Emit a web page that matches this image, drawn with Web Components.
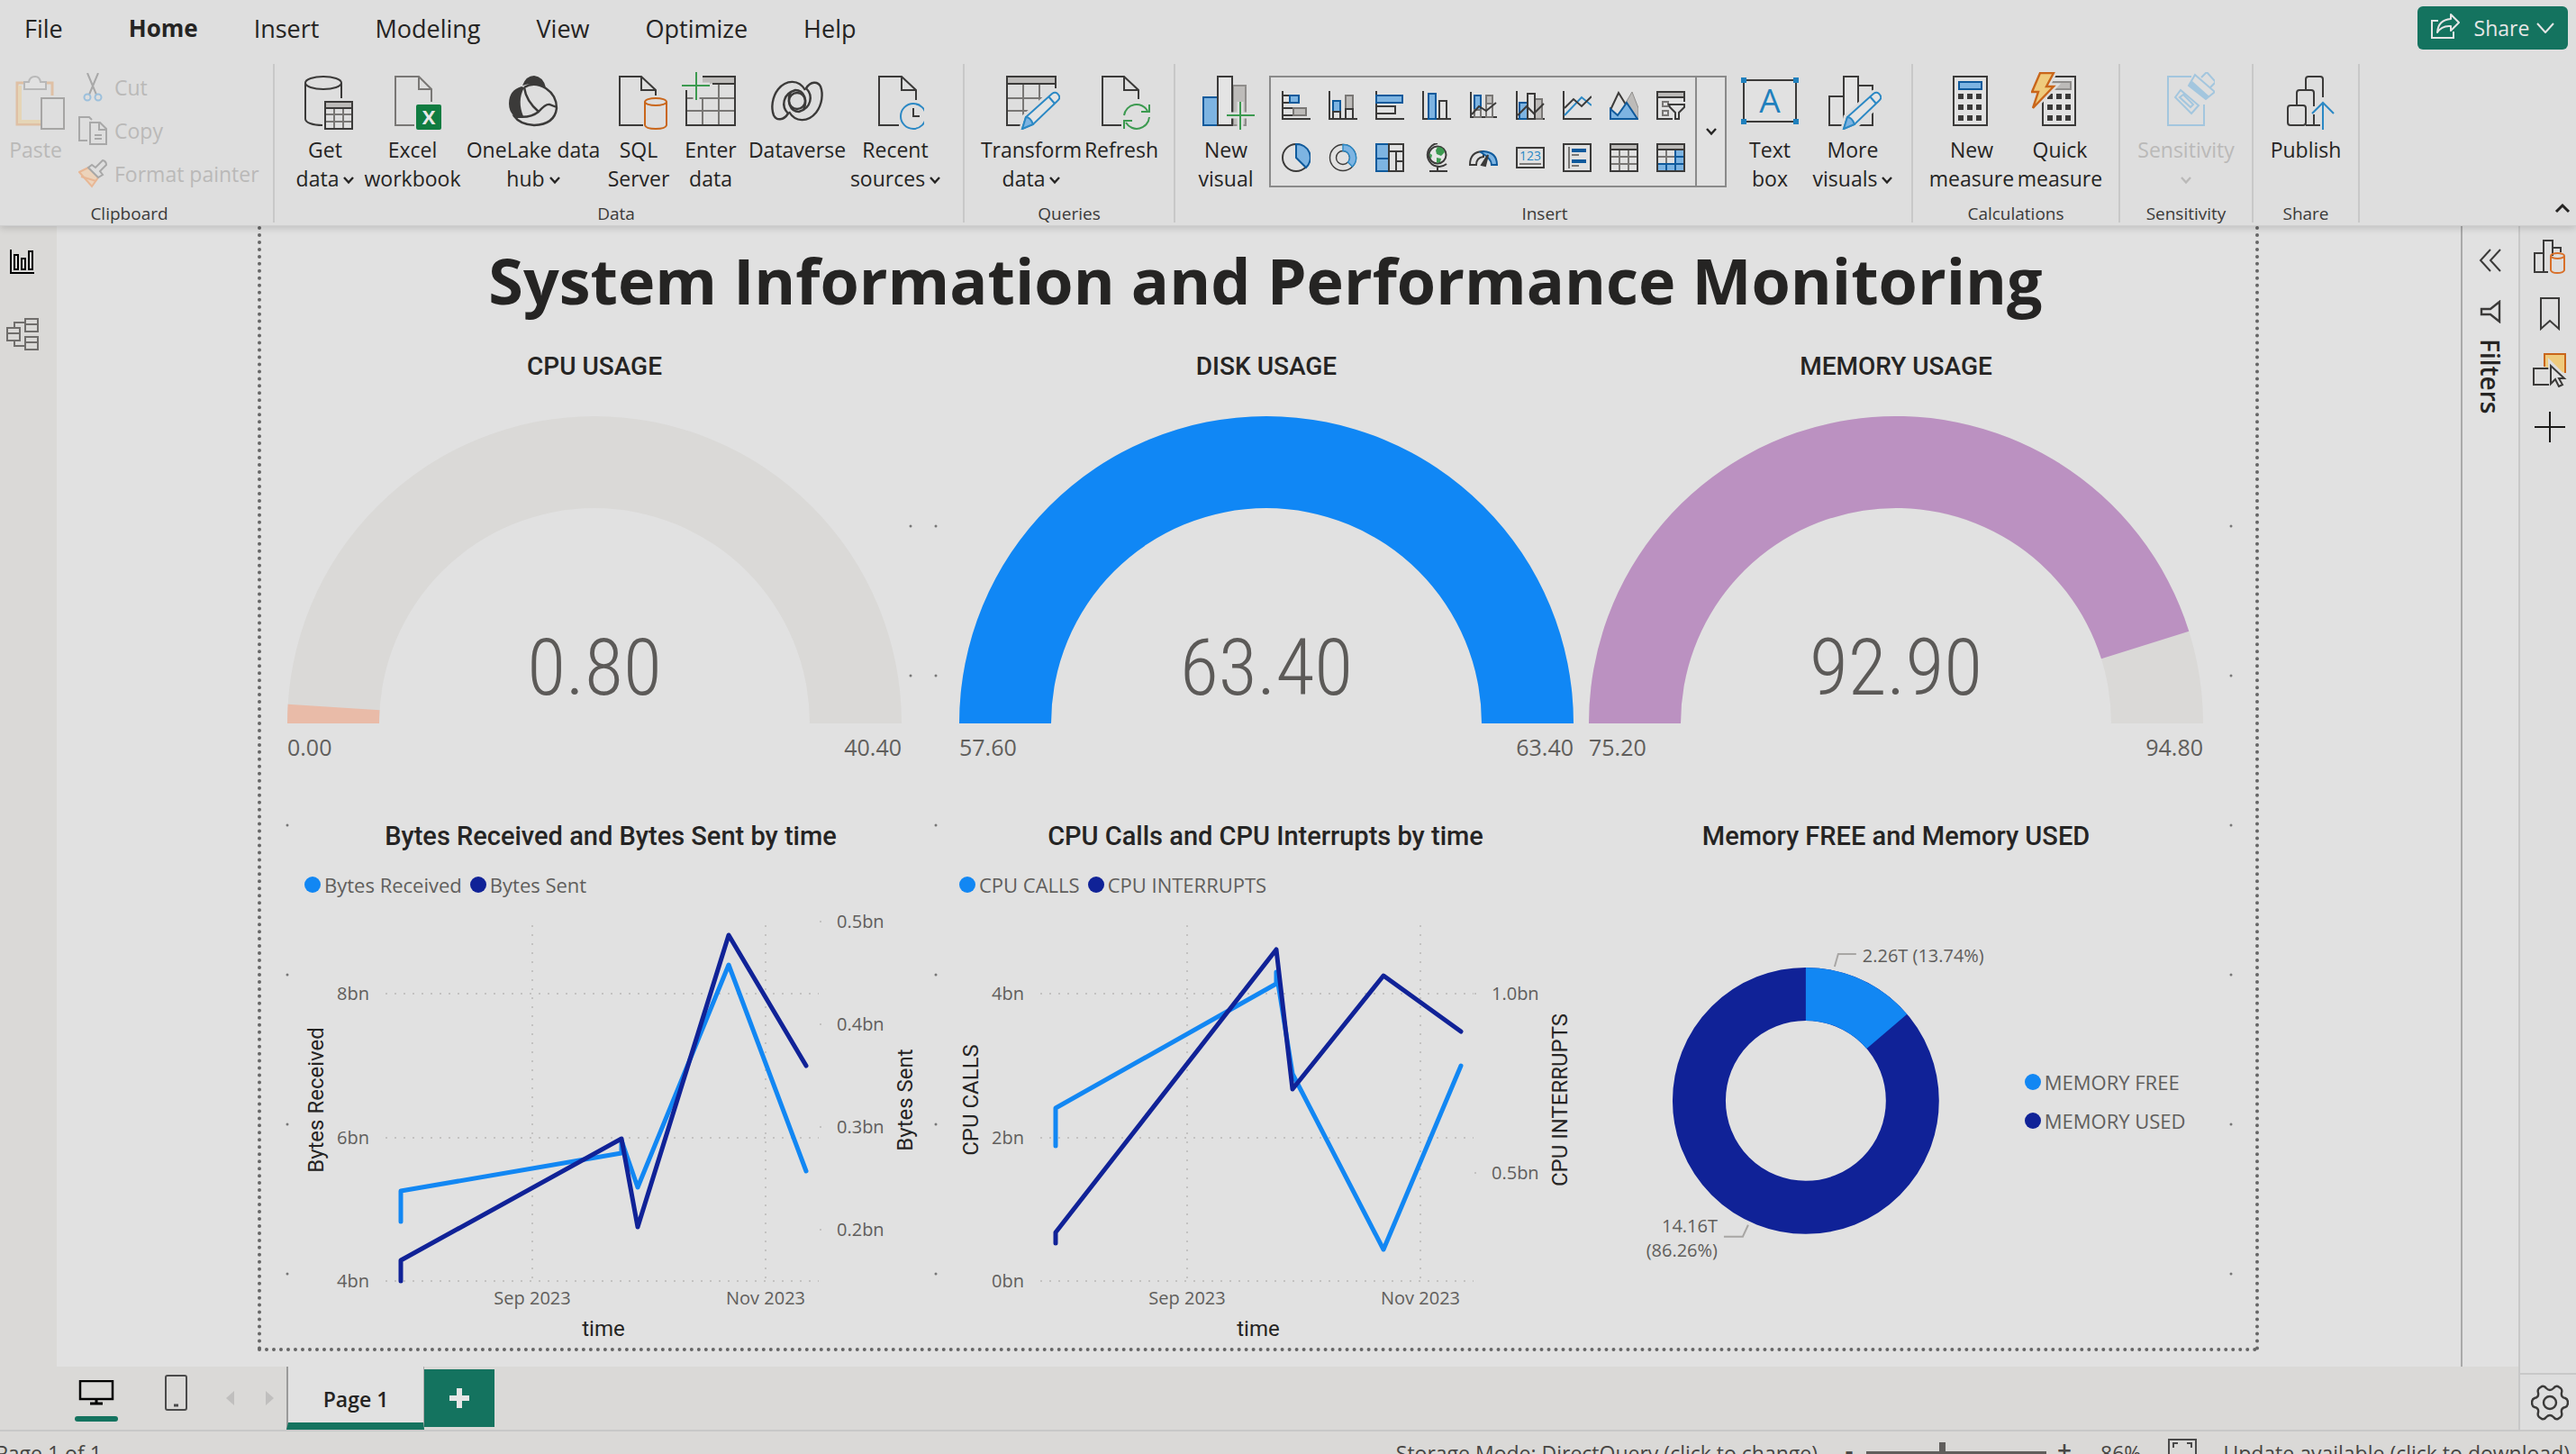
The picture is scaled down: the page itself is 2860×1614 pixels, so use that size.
<!DOCTYPE html>
<html lang="en">
<head>
<meta charset="utf-8">
<title>System Information and Performance Monitoring</title>
<style>
html,body{margin:0;height:100%;overflow:hidden}
body{
  --ribbon:#dedede;--canvas:#e1e1e1;--chrome:#dad9d7;--ink:#252423;--soft:#605e5c;--brand:#14735f;--line:#c8c8c8;
  --din:Roboto,"Liberation Sans",sans-serif;
  font-family:"Open Sans","Noto Sans",sans-serif;font-size:23px;color:var(--ink);background:var(--ribbon);
}
</style>
</head>
<body>
<pbi-app></pbi-app>
<script>
const K='#3b3a39',G='#797775',B='#0f5a9c',LB='#7db4e2',LG='#bdbbb9',BL='#2b88c4',GR='#3c9a50',OR='#c9661b';
const page=(x,r,y=30,b=36)=>`<path d="M${b} 59H${x}V5H${r-16}L${r} 20V${y}M${r-16} 5V20H${r}" fill="none" stroke="${K}" stroke-width="2"/>`;
const pencil=`<path d="M22 64L25 50L54 24Q60 20 63 26Q65 30 62 33L34 60Z" fill="#dedede" stroke="#dedede" stroke-width="7"/><path d="M22 63L26 50L55 24Q59 21 62 25Q65 29 61 32L34 58Z" fill="#e4e4e4" stroke="${BL}" stroke-width="2"/><path d="M22 63L26 50Q31 50 34 58Z" fill="${LB}" stroke="${BL}" stroke-width="2"/><path d="M51 27L58 35" stroke="${BL}" stroke-width="2"/>`;
const axes=`<path d="M1 0V31H32" fill="none" stroke="${K}" stroke-width="2"/>`;
const bar=(x,y,w,h,f,s)=>`<rect x="${x}" y="${y}" width="${w}" height="${h}" fill="${f}" stroke="${s}" stroke-width="2"/>`;
const keys=(x)=>[24,36,48].map(y=>[0,10,20].map(d=>`<rect x="${x+d}" y="${y}" width="6" height="6" fill="${K}"/>`).join('')).join('');
const ICONS={
paste:[64,64,`<g opacity=".55"><path d="M37 58H11V12H18M43 12H50V26" fill="none" stroke="#e0a878" stroke-width="3"/><path d="M14 15V55H37" fill="none" stroke="#eccf97" stroke-width="4"/><path d="M19 11H24Q25 5 31 5Q36 5 37 11H43V19H19Z" fill="#e4e4e4" stroke="#9a9a9a" stroke-width="2"/><rect x="38" y="29" width="25" height="34" fill="#dedede" stroke="${G}" stroke-width="2"/></g>`],
cut:[32,32,`<g fill="none" stroke-width="2"><path d="M10 0L20 24M22 0L12 24" stroke="#a8a8a8"/><circle cx="10" cy="27" r="3.5" stroke="#9cc0dc"/><circle cx="22" cy="27" r="3.5" stroke="#9cc0dc"/></g>`],
copy:[32,32,`<g fill="none" stroke="#a8a8a8" stroke-width="2"><path d="M10 27H1V1H12L15 4"/><path d="M13 7H24L31 14V31H13ZM23 7V15H31M18 21H26M18 25H26"/></g>`],
brush:[32,32,`<path d="M1 14L11 9L22 20L15 30Z" fill="#ecd3bb" stroke="#e8b795" stroke-width="2"/><path d="M3 19L20 24" stroke="#e8b795" stroke-width="2"/><path d="M11 9L15 6L19 9L27 1Q31 2 31 6L24 13L27 17L22 20Z" fill="#dedede" stroke="#a8a8a8" stroke-width="2"/>`],
getdata:[64,64,`<g fill="none" stroke="${K}" stroke-width="2"><ellipse cx="30" cy="12" rx="20" ry="7"/><path d="M10 12V52C10 56 18 59 29 59M50 12V29"/></g><rect x="32" y="33" width="30" height="7" fill="${LG}"/><path d="M32 47H62M32 55H62M42 40V63M52 40V63" stroke="${G}" stroke-width="2"/><path d="M32 33H62V63H32ZM32 40H62" fill="none" stroke="${K}" stroke-width="2"/>`],
excel:[64,64,`<path d="M34 59H13V5H39L53 19V33M39 5V19H53" fill="none" stroke="${G}" stroke-width="2"/><rect x="36" y="36" width="28" height="28" rx="2" fill="#107c41"/><text x="50" y="58" font-family="Open Sans" font-weight="700" font-size="22" text-anchor="middle" fill="#e8e8e8">X</text>`],
onelake:[64,64,`<path d="M20 15Q24 4 33 4Q43 5 46 17Q33 10 20 15Z" fill="${K}"/><path d="M19 16Q5 20 5 35Q5 44 11 49Q16 51 21 49Q14 32 22 17Z" fill="${K}"/><path d="M22 17Q33 10 46 18Q58 26 58 40Q56 58 33 59Q17 58 11 49Q28 52 38 44Q46 35 50 36L58 39M22 17Q24 32 38 44" fill="none" stroke="${K}" stroke-width="2.4"/>`],
sql:[64,64,page(11,51,26,37)+`<g fill="none" stroke="${OR}" stroke-width="2"><ellipse cx="51" cy="33" rx="12" ry="4"/><path d="M39 33V59Q40 63 51 63Q62 63 63 59V33"/></g>`],
enter:[64,64,`<rect x="23" y="5" width="36" height="8" fill="${LG}"/><path d="M5 29H59M5 43H59M23 29V59M41 13V59" stroke="${G}" stroke-width="2"/><path d="M23 5H59V59H5V20M34 13H59" fill="none" stroke="${K}" stroke-width="2"/><path d="M16 0V31M0 15H31" stroke="#dedede" stroke-width="7"/><path d="M16 0V31M0 15H31" stroke="${GR}" stroke-width="2"/>`],
dataverse:[64,64,`<g fill="none" stroke="${K}" stroke-width="2.4"><path d="M41 20C34 8 20 8 11 19C4 28 3 40 6 48C9 54 17 54 22 46C14 38 16 24 30 20C40 20 44 32 39 42"/><path d="M23 44C30 56 44 56 53 45C60 36 61 24 58 16C55 10 47 10 42 18C50 26 48 40 34 44C24 44 20 32 25 22"/><circle cx="32" cy="32" r="9"/></g>`],
recent:[64,64,page(14,55,31,36)+`<circle cx="52" cy="49" r="14" fill="none" stroke="${BL}" stroke-width="2"/><path d="M52 40V49H59" fill="none" stroke="${K}" stroke-width="2"/>`],
transform:[64,64,`<rect x="5" y="5" width="54" height="8" fill="${LG}"/><path d="M5 29H50M5 43H34M23 13V59M41 13V36" stroke="${G}" stroke-width="2"/><path d="M22 59H5V5H59V18M5 13H59" fill="none" stroke="${K}" stroke-width="2"/>`+pencil],
refresh:[64,64,page(11,51,30,32)+`<g fill="none" stroke="${GR}" stroke-width="2"><path d="M35 48A14 14 0 0 1 61 43M63 36V44H54M63 50A14 14 0 0 1 37 56M35 63V54H44"/></g>`],
newvisual:[64,64,bar(40,15,14,44,LG,'#8f8d8b')+bar(7,28,16,31,LB,B)+bar(23,5,16,54,'#e4e4e4',K)+`<path d="M48 33V64M33 48H64" stroke="#dedede" stroke-width="7"/><path d="M48 33V64M33 48H64" stroke="${GR}" stroke-width="2"/>`],
textbox:[64,64,`<rect x="3" y="9" width="58" height="46" fill="#e1e1e1" stroke="${K}" stroke-width="2"/><g fill="#1f80bd"><rect y="6" width="6" height="6"/><rect x="58" y="6" width="6" height="6"/><rect y="52" width="6" height="6"/><rect x="58" y="52" width="6" height="6"/></g><text x="32" y="45" font-family="Open Sans" font-size="37" font-weight="400" text-anchor="middle" fill="#1f80bd">A</text>`],
morevisuals:[64,64,bar(6,27,16,32,'#e0e0e0',K)+bar(22,5,16,54,'#e4e4e4',K)+`<path d="M38 15H54V59H38" fill="none" stroke="${K}" stroke-width="2"/>`+pencil],
newmeasure:[64,64,bar(12,5,37,54,'#e1e1e1',K)+bar(18,11,25,8,LB,B)+keys(17)],
quickmeasure:[64,64,bar(13,5,36,54,'#e1e1e1',K)+bar(20,11,24,8,LG,'#8f8d8b')+keys(18)+`<path d="M10 1H25L17 16H25L2 40L8 22H1Z" fill="#efcb7d" stroke="#dedede" stroke-width="7"/><path d="M10 1H25L17 16H25L2 40L8 22H1Z" fill="#efcb7d" stroke="${OR}" stroke-width="2.4"/>`],
sensitivity:[64,64,`<g fill="none" stroke="#a3c6de" stroke-width="2"><path d="M38 5H12V59H52V36"/><path d="M20 28L26 20L46 37L38 46ZM25 28L29 25L40 36L37 39Z"/><path d="M35 15L42 3L64 22L54 30ZM49 6L55 0L65 11L59 17"/></g><path d="M35 15L39 10L58 27L54 30Z" fill="#a3c6de"/>`],
publish:[64,64,`<g fill="none" stroke="${K}" stroke-width="2"><rect x="12" y="37" width="20" height="22" rx="3"/><path d="M22 37V23Q22 20 25 20H38Q41 20 41 23V38M32 20V8Q32 5 35 5H48Q51 5 51 8V28M32 59H48M41 47V59"/></g><path d="M51 64V34M39 46L51 34L63 46" fill="none" stroke="${BL}" stroke-width="2"/>`],
v1:[32,32,axes+bar(1,5,8,8,'none',K)+bar(9,5,10,8,LB,B)+bar(1,19,12,8,'none',K)+bar(13,19,14,8,LG,G)],
v2:[32,32,axes+bar(5,11,8,12,LB,B)+bar(5,23,8,8,'none',K)+bar(19,5,8,15,LG,G)+bar(19,20,8,11,'none',K)],
v3:[32,32,axes+bar(1,5,29,8,LB,B)+bar(1,17,21,8,'none',K)],
v4:[32,32,axes+bar(7,3,8,28,LB,B)+bar(19,11,8,20,'none',K)],
v5:[32,32,`<path d="M2 1V29H31" fill="none" stroke="${K}" stroke-width="2"/>`+bar(6,5,7,16,LB,B)+bar(6,21,7,8,'none',G)+bar(19,5,7,9,LG,G)+bar(19,14,7,15,'none',G)+`<path d="M3 26L11 17L19 22L30 13" fill="none" stroke="${K}" stroke-width="2"/>`],
v6:[32,32,axes+bar(4,13,9,18,LB,B)+bar(21,9,8,22,LG,G)+bar(13,3,8,28,'#e1e1e1',K)+`<path d="M2 27L12 17L20 25L31 14" fill="none" stroke="${K}" stroke-width="2"/>`],
v7:[32,32,axes+`<path d="M2 27L21 7L32 16" fill="none" stroke="${BL}" stroke-width="2"/><path d="M2 19L12 9L21 17L32 6" fill="none" stroke="${K}" stroke-width="2"/>`],
v8:[32,32,`<path d="M18 13L25 1L32 19V31H25Z" fill="${LG}" stroke="#8f8d8b" stroke-width="1"/><path d="M1 21L10 2L18 15" fill="none" stroke="${K}" stroke-width="2"/><path d="M1 20V31H31L19 13L9 27Z" fill="${LB}" stroke="${B}" stroke-width="2"/>`],
v9:[32,32,`<rect x="1" y="1" width="30" height="6" fill="${LG}"/><path d="M18 31H1V1H31V12M1 7H31" fill="none" stroke="${K}" stroke-width="2"/>`+bar(7,12,6,5,'none',G)+bar(7,22,6,5,'none',G)+`<path d="M14 15H31V18L25 24V31H21V24L15 18Z" fill="#e1e1e1" stroke="${K}" stroke-width="2"/>`],
w1:[32,32,`<circle cx="16" cy="16" r="15" fill="#e1e1e1" stroke="${K}" stroke-width="2"/><path d="M16 1A15 15 0 0 1 27 27L16 16Z" fill="${LB}" stroke="${B}" stroke-width="2"/>`],
w2:[32,32,`<g fill="none" stroke="${K}" stroke-width="1.4"><circle cx="16" cy="16" r="14.5"/><circle cx="16" cy="16" r="7.5"/></g><path d="M16 1.5A14.5 14.5 0 0 1 26.5 26L21.5 21A7.5 7.5 0 0 0 16 8.5Z" fill="${LB}" stroke="${BL}" stroke-width="1.4"/>`],
w3:[32,32,bar(1,1,14,16,LB,B)+bar(1,17,14,14,LB,B)+bar(15,1,16,8,'none',K)+bar(15,9,8,22,'none',K)+bar(23,9,8,11,'none',K)+bar(23,20,8,11,'none',K)],
w4:[32,32,`<circle cx="17" cy="13" r="9.5" fill="#e6e6e6" stroke="${K}" stroke-width="2"/><path d="M17 4Q24 4 25 10L21 14L16 12L15 8ZM16 16L21 17L20 21L16 22Z M8 11L11 13L10 17Q8 15 8 11Z" fill="${GR}"/><path d="M17 0A13 13 0 1 0 27 23M17 26V31M8 31H28" fill="none" stroke="${K}" stroke-width="2"/>`],
w5:[32,32,`<path d="M1 24Q1 9 16 9V15Q8 16 8 24Z" fill="#e1e1e1" stroke="${K}" stroke-width="2"/><path d="M16 9Q31 10 31 24H25Q25 17 13 10Z" fill="${LB}" stroke="${B}" stroke-width="2"/><path d="M14 24L21 13L18 25Z" fill="${K}" stroke="${K}" stroke-width="2"/>`],
w6:[32,32,`<rect x="1" y="5" width="30" height="22" fill="none" stroke="${K}" stroke-width="2"/><text x="16" y="19" font-family="Open Sans" font-size="14" text-anchor="middle" fill="${BL}">123</text><path d="M4 23H28" stroke="${G}" stroke-width="2"/>`],
w7:[32,32,`<rect x="1" y="1" width="30" height="30" fill="none" stroke="${K}" stroke-width="2"/><path d="M7 4V28M10 13H18M10 25H18" stroke="${G}" stroke-width="2"/><path d="M10 8H26M10 20H26" stroke="${B}" stroke-width="4"/>`],
w8:[32,32,`<rect x="1" y="1" width="30" height="6" fill="${LG}"/><path d="M1 15H31M1 23H31M11 7V31M21 7V31" stroke="${G}" stroke-width="2"/><path d="M1 1H31V31H1ZM1 7H31" fill="none" stroke="${K}" stroke-width="2"/>`],
w9:[32,32,`<rect x="1" y="1" width="30" height="6" fill="${LG}"/><path d="M21 7H31V31H1V23H21Z" fill="${LB}"/><path d="M1 15H31M1 23H31M11 7V31M21 7V31" stroke="${G}" stroke-width="2"/><path d="M21 8V31M11 23V31M1 23H31M21 15H31" stroke="${B}" stroke-width="2"/><path d="M1 1H31V31H1ZM1 7H31" fill="none" stroke="${K}" stroke-width="2"/>`],
down:[12,10,`<path d="M1 2L6 7.5L11 2" fill="none" stroke="currentColor" stroke-width="2.4"/>`],
up:[18,12,`<path d="M2 10L9 3L16 10" fill="none" stroke="currentColor" stroke-width="3"/>`],
sharedown:[20,12,`<path d="M1 1L10 11L19 1" fill="none" stroke="currentColor" stroke-width="2"/>`],
share:[32,28,`<path d="M8 8H1V27H25V20" fill="none" stroke="currentColor" stroke-width="2"/><path d="M22 1L31 10L22 19V14Q12 13 7 21Q8 7 22 6Z" fill="none" stroke="currentColor" stroke-width="2" stroke-linejoin="round"/>`],
report:[28,28,`<g fill="none" stroke="#000" stroke-width="2"><path d="M1 0V26H27"/><rect x="5" y="6" width="4" height="16"/><rect x="13" y="10" width="4" height="12"/><rect x="21" y="2" width="4" height="20"/></g>`],
model:[36,36,`<g fill="none" stroke="#706e6c" stroke-width="2"><path d="M1 11H15V25H1ZM1 17H15M21 1H35V15H21ZM21 7H35M21 21H35V35H21ZM21 27H35M9 11V5H21M9 25V31H21"/></g>`],
collapse:[26,26,`<path d="M13 1L2 13L13 25M24 1L13 13L24 25" fill="none" stroke="${K}" stroke-width="2"/>`],
funnel:[24,26,`<path d="M22 2V24L12 16H2V10H12Z" fill="none" stroke="${K}" stroke-width="2.4"/>`],
build:[36,38,`<g fill="none" stroke="${K}" stroke-width="2"><path d="M11 15H1V36H16M11 36V1H21V36M21 9H30V14"/></g><path d="M19 18V33Q20 37 26 37Q33 37 34 33V18Z" fill="#dedede"/><g fill="none" stroke="#d8702a" stroke-width="2"><ellipse cx="26.5" cy="18" rx="7.5" ry="3"/><path d="M19 18V34Q20 37 26 37Q33 37 34 34V18"/></g>`],
bookmark:[24,38,`<path d="M2 2H22V36L12 27L2 36Z" fill="none" stroke="${K}" stroke-width="2"/>`],
selection:[38,38,`<path d="M13 15V1H36V22" fill="#efcb7d" stroke="${OR}" stroke-width="2"/><rect x="1" y="17" width="18" height="18" fill="#dedede" stroke="${K}" stroke-width="2"/><path d="M19 10L36 27H29L33 36L29 38L25 29L20 34Z" fill="#e1e1e1" stroke="#dedede" stroke-width="4"/><path d="M20 14V34L25 29L29 37L33 35L29 28H35Z" fill="#e1e1e1" stroke="${K}" stroke-width="2"/>`],
plus:[36,36,`<path d="M18 1V35M1 18H35" stroke="#1b1a19" stroke-width="2"/>`],
desktop:[40,28,`<path d="M2 1H38V21H2Z" fill="none" stroke="#000" stroke-width="2.5"/><path d="M20 21V26M13 26H27" stroke="#000" stroke-width="3"/>`],
mobile:[26,40,`<rect x="1" y="1" width="23" height="38" rx="2" fill="none" stroke="#4a4a4a" stroke-width="2"/><path d="M10 34H15" stroke="#4a4a4a" stroke-width="3"/>`],
prev:[10,16,`<path d="M9 0V16L0 8Z" fill="#c0bfbe"/>`],
next:[10,16,`<path d="M0 0V16L9 8Z" fill="#c0bfbe"/>`],
add:[24,24,`<path d="M12 1V23M1 12H23" stroke="#e6e6e6" stroke-width="6"/>`],
fit:[32,32,`<path d="M1 1H31V31H1Z" fill="none" stroke="#4a4a4a" stroke-width="2"/><path d="M6 10V5H11M21 5H26V10M6 22V27H11M21 27H26V22" fill="none" stroke="#4a4a4a" stroke-width="2"/>`],
gear:[42,40,`<path d="M12 2Q15 1 17 4Q21 8 25 4Q27 1 30 2L33 4Q35 6 34 9Q33 14 38 15Q41 16 41 20Q41 24 38 25Q33 26 34 31Q35 34 33 36L30 38Q27 39 25 36Q21 32 17 36Q15 39 12 38L9 36Q7 34 8 31Q9 26 4 25Q1 24 1 20Q1 16 4 15Q9 14 8 9Q7 6 9 4Z" fill="none" stroke="${K}" stroke-width="2.4" stroke-linejoin="round"/><circle cx="21" cy="20" r="7" fill="none" stroke="${K}" stroke-width="2.4"/>`]
};
const icon=n=>{const [w,h,b]=ICONS[n];return `<svg class="i" width="${w}" height="${h}" viewBox="0 0 ${w} ${h}" aria-hidden="true">${b}</svg>`};
const RESET=`*{box-sizing:border-box}button{font:inherit;color:inherit;background:none;border:0;padding:0;margin:0}svg{display:block;flex:none}`;
class Base extends HTMLElement{
  connectedCallback(){
    if(this.shadowRoot)return;
    this.attachShadow({mode:'open'}).innerHTML=`<style>${RESET}${this.css()}</style>${this.html()}`;
  }
  a(n){return this.getAttribute(n)||''}
}
const def=(name,css,html)=>customElements.define(name,class extends Base{css(){return css}html(){return html(this)}});

def('pbi-menu',`:host{display:flex;align-items:center;height:62px;font-size:27px}
nav{display:flex;flex:1;margin-left:-4px}
nav button{padding:0 31px;height:62px}
nav button:first-child{margin-right:11px}
nav .on{font-weight:700;font-size:26px}
.share{display:flex;align-items:center;height:48px;width:167px;justify-content:center;border-radius:6px;background:var(--brand);color:#e6e6e6;font-size:23px;margin-right:9px;gap:8px}
.share svg:first-child{margin:0 8px 4px 0}`,
()=>`<nav>${['File','Home','Insert','Modeling','View','Optimize','Help'].map(t=>`<button class="${t=='Home'?'on':''}">${t}</button>`).join('')}</nav><button class="share">${icon('share')}Share${icon('sharedown')}</button>`);

def('pbi-group',`:host{display:flex;flex-direction:column;border-right:2px solid var(--line);height:176px;padding:0 16px;flex:none}
.t{display:flex;flex:1}
.l{font-size:19px;line-height:20px;text-align:center;color:#3b3a39}`,
e=>`<div class="t"><slot></slot></div><div class="l">${e.a('label')}</div>`);

def('pbi-tool',`:host{display:block;flex:none}
button{display:flex;flex-direction:column;align-items:center;width:100%;padding-top:9px;line-height:32px}
.i{margin-bottom:6px}
span{white-space:nowrap;display:flex;align-items:center;justify-content:center;gap:5px;min-height:32px}
span svg{margin:4px 0 0}
button:disabled{color:#bab9b8}`,
e=>{const [p,q]=e.a('label').split('|');const c=e.hasAttribute('menu')?icon('down').replace('class="i"',''):'';
return `<button ${e.hasAttribute('off')?'disabled':''}>${icon(e.a('icon'))}<span>${p}</span>${q!==undefined?`<span>${q}${c}</span>`:''}</button>`});

def('pbi-clip-list',`:host{display:block;padding:2px 0 0 8px}
button{display:flex;align-items:center;gap:8px;height:48px;color:#bab9b8;white-space:nowrap}`,
()=>[['cut','Cut'],['copy','Copy'],['brush','Format painter']].map(([i,t])=>`<button disabled>${icon(i)}${t}</button>`).join(''));

def('pbi-gallery',`:host{display:flex;width:508px;height:124px;margin:13px 8px 0;border:2px solid #8a8a8a;background:#e1e1e1}
.g{flex:1;display:grid;grid-template-columns:repeat(9,52px);grid-auto-rows:58px;padding:2px 0 0 2px}
button{display:flex;align-items:center;justify-content:center}
.m{width:33px;border-left:2px solid #8a8a8a}`,
()=>`<div class="g">${['v','w'].map(r=>[1,2,3,4,5,6,7,8,9].map(n=>`<button aria-label="Visual ${r}${n}">${icon(r+n)}</button>`).join('')).join('')}</div><button class="m" aria-label="More">${icon('down')}</button>`);

def('pbi-ribbon',`:host{display:block;background:var(--ribbon);box-shadow:0 2px 8px rgba(0,0,0,.16);border-bottom:1px solid #cfcfcf;height:251px;position:relative;z-index:2}
.row{display:flex;padding-top:9px}
.clip{margin-left:-16px;width:321px}
.data{padding-right:22px}
.insert{padding-right:13px}
.up{margin-left:auto;align-self:flex-end;padding:0 6px 10px}`,
()=>{const T=(i,l,w,x='')=>`<pbi-tool icon="${i}" label="${l}" style="width:${w}px" ${x}></pbi-tool>`;
return `<pbi-menu></pbi-menu><div class="row">
<pbi-group class="clip" label="Clipboard">${T('paste','Paste',79,'off')}<pbi-clip-list></pbi-clip-list></pbi-group>
<pbi-group class="data" label="Data">${T('getdata','Get|data',80,'menu')+T('excel','Excel|workbook',114)+T('onelake','OneLake data|hub',154,'menu')+T('sql','SQL|Server',80)+T('enter','Enter|data',80)+T('dataverse','Dataverse',112)+T('recent','Recent|sources',106,'menu')}</pbi-group>
<pbi-group label="Queries">${T('transform','Transform|data',116,'menu')+T('refresh','Refresh',84)}</pbi-group>
<pbi-group class="insert" label="Insert">${T('newvisual','New|visual',80)}<pbi-gallery></pbi-gallery>${T('textbox','Text|box',80)+T('morevisuals','More|visuals',104,'menu')}</pbi-group>
<pbi-group label="Calculations">${T('newmeasure','New|measure',98)+T('quickmeasure','Quick|measure',98)}</pbi-group>
<pbi-group label="Sensitivity">${T('sensitivity','Sensitivity|',114,'menu off')}</pbi-group>
<pbi-group label="Share">${T('publish','Publish',84)}</pbi-group>
<button class="up" aria-label="Collapse ribbon">${icon('up')}</button></div>`});

def('pbi-views',`:host{display:block;background:var(--chrome)}
button{display:flex;height:80px;width:50px;align-items:center;justify-content:center}`,
()=>`<button aria-label="Report view">${icon('report')}</button><button aria-label="Model view">${icon('model')}</button>`);

def('pbi-filters',`:host{display:flex;flex-direction:column;align-items:center;border-left:2px solid #a9a9a9;border-right:2px solid var(--line);background:var(--canvas);padding-top:25px}
button{margin-bottom:31px}
span{writing-mode:vertical-rl;font-weight:600;font-size:28px;line-height:40px}
svg+span{margin-top:17px}`,
()=>`<button aria-label="Expand filters">${icon('collapse')}</button>${icon('funnel')}<span>Filters</span>`);

def('pbi-panes',`:host{display:flex;flex-direction:column;background:var(--ribbon);padding-top:2px}
button{display:flex;height:63px;align-items:center;justify-content:center;padding-left:3px}
.gear{margin-top:auto;border-top:2px solid var(--line)}`,
()=>['build','bookmark','selection','plus'].map(n=>`<button aria-label="${n}">${icon(n)}</button>`).join('')+`<button class="gear" aria-label="Settings">${icon('gear')}</button>`);

def('pbi-gauge',`:host{display:block;flex:1}
h2{margin:0 0 36px;font:500 28px/38px var(--din);text-align:center}
.d{display:grid}
.d>*{grid-area:1/1}
svg{width:100%;height:auto}
.v{align-self:end;justify-self:center;font:300 88px/100px "Roboto Condensed",var(--din);color:#5c5a58;margin-bottom:12px}
.r{display:flex;justify-content:space-between;font-size:25px;line-height:36px;margin-top:8px;color:var(--soft)}`,
e=>{const f=+e.a('fill')*Math.PI,p=r=>`${341-r*Math.cos(f)} ${341-r*Math.sin(f)}`;
const arc=f>3.14?`M0 341A341 341 0 0 1 682 341H580A239 239 0 0 0 102 341Z`:`M0 341A341 341 0 0 1 ${p(341)}L${p(239)}A239 239 0 0 0 102 341Z`;
return `<h2>${e.a('label')}</h2><div class="d"><svg viewBox="0 0 682 341"><path d="M0 341A341 341 0 0 1 682 341H580A239 239 0 0 0 102 341Z" fill="#dad9d7"/><path d="${arc}" fill="${e.a('color')}"/></svg><div class="v">${e.a('value')}</div></div><div class="r"><span>${e.a('min')}</span><span>${e.a('max')}</span></div>`});

const LEG=`.k{display:flex;align-items:center;gap:4px;line-height:30px;white-space:nowrap}.k i{width:18px;height:18px;border-radius:50%}`;
const leg=(t,c)=>`<span class="k"><i style="background:${c}"></i>${t}</span>`;
const LIGHT='#1287f3',DARK='#102297';
const CHARTS={
bytes:{title:'Bytes Received and Bytes Sent by time',names:['Bytes Received','Bytes Sent'],left:['8bn','6bn','4bn'],right:[[13,'0.5bn'],[127,'0.4bn'],[241,'0.3bn'],[355,'0.2bn']],
 a:'126,346 126,312 371,270 371,256 389,308 490,61 576,290',b:'126,412 126,389 371,254 389,352 490,28 576,173'},
cpu:{title:'CPU Calls and CPU Interrupts by time',names:['CPU CALLS','CPU INTERRUPTS'],left:['4bn','2bn','0bn'],right:[[93,'1.0bn'],[292,'0.5bn']],
 a:'126,262 126,220 371,82 371,69 389,182 490,377 576,173',b:'126,370 126,358 371,44 389,199 490,73 576,135'}};
def('pbi-line-chart',`:host{display:block}
h2{margin:0;font:500 29px/38px var(--din);text-align:center}
.g{display:flex;gap:9px;margin:20px 0 13px 19px;font-size:22px;color:var(--soft)}${LEG}
svg{width:100%;height:auto}
text{font-size:20px;fill:var(--soft)}
.ax{font:24px var(--din);fill:var(--ink);text-anchor:middle}
.grid{stroke:#c3c2c1;stroke-width:2;stroke-dasharray:2 8;fill:none}
polyline{fill:none;stroke-width:5;stroke-linejoin:round;stroke-linecap:round}`,
e=>{const c=CHARTS[e.a('data')],y=[93,253,412];
return `<h2>${c.title}</h2><div class="g">${leg(c.names[0],LIGHT)+leg(c.names[1],DARK)}</div>
<svg viewBox="0 0 718 480"><path class="grid" d="${y.map(v=>`M109 ${v}H590`).join('')}M272 17V412M531 17V412${c.right.map(r=>`M591 ${r[0]}h2`).join('')}"/>
${y.map((v,i)=>`<text x="91" y="${v+7}" text-anchor="end">${c.left[i]}</text>`).join('')}${c.right.map(r=>`<text x="610" y="${r[0]+7}">${r[1]}</text>`).join('')}
<text x="272" y="438" text-anchor="middle">Sep 2023</text><text x="531" y="438" text-anchor="middle">Nov 2023</text>
<text class="ax" x="351" y="473">time</text><text class="ax" transform="translate(40 211) rotate(-90)">${c.names[0]}</text><text class="ax" transform="translate(694 211) rotate(-90)">${c.names[1]}</text>
<polyline points="${c.a}" stroke="${LIGHT}"/><polyline points="${c.b}" stroke="${DARK}"/></svg>`});

def('pbi-donut',`:host{display:block}
h2{margin:0 0 8px;font:500 29px/38px var(--din);text-align:center}
.b{display:flex;align-items:center}
svg{width:71.5%;height:auto}
.g{display:flex;flex-direction:column;gap:13px;font-size:22px;color:var(--soft)}${LEG}
text{font-size:20px;fill:var(--soft)}`,
()=>{const t=.1374*2*Math.PI,p=r=>`${232+r*Math.sin(t)} ${267-r*Math.cos(t)}`;
return `<h2>Memory FREE and Memory USED</h2><div class="b"><svg viewBox="0 0 475 535"><circle cx="232" cy="267" r="118.5" fill="none" stroke="${DARK}" stroke-width="59"/><path d="M232 119A148 148 0 0 1 ${p(148)}L${p(89)}A89 89 0 0 0 232 178Z" fill="${LIGHT}"/>
<path d="M264 118L268 104H288M141 418H162L168 405" fill="none" stroke="#a8a6a4" stroke-width="2"/>
<text x="295" y="113">2.26T (13.74%)</text><text x="134" y="413" text-anchor="end">14.16T</text><text x="134" y="440" text-anchor="end">(86.26%)</text></svg>
<div class="g">${leg('MEMORY FREE',LIGHT)+leg('MEMORY USED',DARK)}</div></div>`});

def('pbi-report',`:host{display:block;background:var(--canvas);padding:0 224px 17px 223px;min-width:0}
.page{position:relative;height:100%;border:4px dotted #666;border-top:0;padding-top:10px}
h1{margin:0 0 27px;font-size:70px;line-height:100px;font-weight:700;text-align:center;padding-left:16px;white-space:nowrap}
.g{display:flex;gap:17px;padding:0 58px 0 29px}
.g>:first-child{margin-right:47px}
.c{display:grid;grid-template-columns:718fr 718fr 664fr;gap:9px;padding:0 67px 0 29px;margin-top:62px}
.dots{position:absolute;left:0;top:0;width:100%;height:100%;pointer-events:none}`,
()=>{const d=[];[584,750,916,1082,1248,1414].forEach((y,i)=>{if(i>1)d.push([319,y]);else d.push([1011,y]);d.push([1039,y],[2477,y])});
return `<div class="page"><h1>System Information and Performance Monitoring</h1>
<div class="g"><pbi-gauge label="CPU USAGE" value="0.80" min="0.00" max="40.40" fill="0.0198" color="#e9bba8"></pbi-gauge><pbi-gauge label="DISK USAGE" value="63.40" min="57.60" max="63.40" fill="1" color="#1087f5"></pbi-gauge><pbi-gauge label="MEMORY USAGE" value="92.90" min="75.20" max="94.80" fill="0.903" color="#bb91c1"></pbi-gauge></div>
<div class="c"><pbi-line-chart data="bytes"></pbi-line-chart><pbi-line-chart data="cpu"></pbi-line-chart><pbi-donut></pbi-donut></div>
<svg class="dots" aria-hidden="true">${d.map(([x,y])=>`<circle cx="${x-290}" cy="${y-251}" r="1.5" fill="#777"/>`).join('')}</svg></div>`});

def('pbi-pages',`:host{display:flex;align-items:stretch;background:var(--chrome);height:70px;padding-left:69px;border-right:2px solid var(--line)}
button{display:flex;justify-content:center;align-items:center}
.dev{width:76px;padding-bottom:12px}
.dev.on{position:relative}
.dev.on::after{content:"";position:absolute;left:14px;right:14px;bottom:9px;height:6px;border-radius:3px;background:var(--brand)}
.mob{width:102px;padding-bottom:12px}
.n{width:44px}
.prev{margin-left:-13px}
.tab{width:153px;background:var(--canvas);border-left:2px solid #9a9a9a;border-right:1px solid #aaa;border-bottom:8px solid var(--brand);font-weight:600;font-size:23px;margin-left:-4px;padding-top:10px}
.add{width:78px;height:64px;margin-top:3px;background:var(--brand)}`,
()=>`<button class="dev on" aria-label="Desktop layout">${icon('desktop')}</button><button class="mob" aria-label="Mobile layout">${icon('mobile')}</button><button class="n prev" aria-label="Previous">${icon('prev')}</button><button class="n" aria-label="Next">${icon('next')}</button><button class="tab">Page 1</button><button class="add" aria-label="New page">${icon('add')}</button>`);

def('pbi-status',`:host{display:flex;align-items:center;height:49px;border-top:2px solid var(--line);background:var(--chrome);color:#484644;white-space:nowrap;padding-right:7px}
.p{margin:0 auto 0 -5px}
button{line-height:46px}
.z{font-size:28px;font-weight:600;width:14px;text-align:center;padding-bottom:8px}
.s{margin-left:28px}
input{appearance:none;flex:none;width:200px;height:33px;margin:0 12px;background:linear-gradient(#605e5c,#605e5c) center/100% 3px no-repeat}
input::-webkit-slider-thumb{appearance:none;width:7px;height:24px;background:#605e5c}
.pc{margin:0 30px 0 34px}
.u{margin-left:29px}`,
()=>`<span class="p">Page 1 of 1</span><button>Storage Mode: DirectQuery (click to change)</button><button class="z s" aria-label="Zoom out">-</button><input type="range" aria-label="Zoom" value="42"><button class="z" aria-label="Zoom in">+</button><span class="pc">86%</span><button aria-label="Fit to page">${icon('fit')}</button><button class="u">Update available (click to download)</button>`);

def('pbi-app',`:host{display:grid;height:calc(100vh + 22px);grid-template-columns:63px minmax(0,1fr) 66px 62px;grid-template-rows:251px minmax(0,1fr) 70px 49px}
pbi-ribbon,pbi-status{grid-column:1/-1}
pbi-pages{grid-column:1/4;grid-row:3}
pbi-panes{grid-column:4;grid-row:2/4}`,
()=>`<pbi-ribbon></pbi-ribbon><pbi-views></pbi-views><pbi-report></pbi-report><pbi-filters></pbi-filters><pbi-panes></pbi-panes><pbi-pages></pbi-pages><pbi-status></pbi-status>`);
</script>
</body>
</html>
